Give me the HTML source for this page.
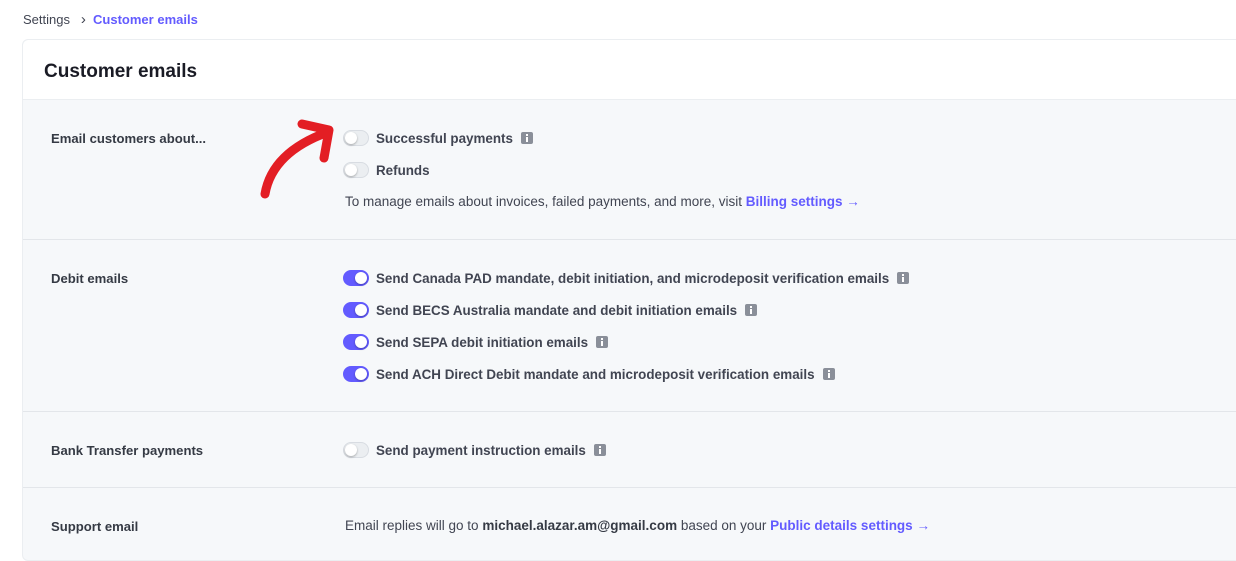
<!DOCTYPE html>
<html><head><style>
body{margin:0;width:1236px;height:544px;overflow:hidden;background:#fff;font-family:"Liberation Sans",sans-serif;color:#353a44;position:relative}
.bc{position:absolute;top:11px;left:23px;font-size:13px;color:#414552}
.bc b{color:#635bff;margin-left:8px}
.card{position:absolute;left:22px;top:39px;width:1240px;height:520px;border:1px solid #ebeef1;border-radius:6px;background:#f6f8fa}
.hd{height:59px;background:#fff;border-bottom:1px solid #ebeef1;border-radius:6px 6px 0 0}
.hd h1{margin:0;position:absolute;left:21px;top:21px;font-size:19px;font-weight:bold;color:#1a1b25}
.sec{position:absolute;left:0;width:100%;border-top:1px solid #e3e6ea}
.lab{position:absolute;left:28px;font-size:13.1px;font-weight:bold;color:#353a44}
.row{position:absolute;left:320px;font-size:13.4px;font-weight:bold;color:#414552;white-space:nowrap;display:flex;align-items:center}
.t{width:26px;height:16px;border-radius:8px;background:#ebeef1;border:1px solid #d8dce2;box-sizing:border-box;position:relative;margin-right:7px}
.t:after{content:"";position:absolute;left:1px;top:1px;width:12px;height:12px;border-radius:50%;background:#fff;box-shadow:0 1px 2px rgba(0,0,0,.3)}
.t.on{background:#635bff;border-color:#635bff}
.t.on:after{left:11px}
.i{display:inline-block;width:12px;height:12px;background:#8a8f99;border-radius:2px;margin-left:8px;position:relative}
.i:after{content:"";position:absolute;left:5px;top:5px;width:2px;height:5px;background:#fff}
.i:before{content:"";position:absolute;left:5px;top:2px;width:2px;height:2px;background:#fff}
a{color:#635bff;font-weight:bold;text-decoration:none}
</style></head><body>
<div class="bc">Settings &nbsp;&nbsp;<span style="font-size:15px">&#x203A;</span> &nbsp;<b style="margin-left:0">Customer emails</b></div>
<div class="card">
<div class="hd"><h1>Customer emails</h1></div>
<div class="lab" style="top:91px">Email customers about...</div>
<div class="row" style="top:90px"><span class="t"></span>Successful payments<span class="i"></span></div>
<div class="row" style="top:122px"><span class="t"></span>Refunds</div>
<div class="row" style="top:154px;left:322px;font-weight:normal;font-size:13.5px">To manage emails about invoices, failed payments, and more, visit&nbsp;<a>Billing settings →</a></div>
<div class="sec" style="top:199px"></div>
<div class="lab" style="top:231px">Debit emails</div>
<div class="row" style="top:230px"><span class="t on"></span>Send Canada PAD mandate, debit initiation, and microdeposit verification emails<span class="i"></span></div>
<div class="row" style="top:262px"><span class="t on"></span>Send BECS Australia mandate and debit initiation emails<span class="i"></span></div>
<div class="row" style="top:294px"><span class="t on"></span>Send SEPA debit initiation emails<span class="i"></span></div>
<div class="row" style="top:326px"><span class="t on"></span>Send ACH Direct Debit mandate and microdeposit verification emails<span class="i"></span></div>
<div class="sec" style="top:371px"></div>
<div class="lab" style="top:403px">Bank Transfer payments</div>
<div class="row" style="top:402px"><span class="t"></span>Send payment instruction emails<span class="i"></span></div>
<div class="sec" style="top:447px"></div>
<div class="lab" style="top:479px">Support email</div>
<div class="row" style="top:478px;left:322px;font-weight:normal;font-size:13.5px">Email replies will go to&nbsp;<b style="color:#353a44">michael.alazar.am@gmail.com</b>&nbsp;based on your&nbsp;<a>Public details settings →</a></div>
</div>
<svg style="position:absolute;left:0;top:0" width="1236" height="544"><path d="M265 194 C270 165 292 145 328 132 M302 124 L329 130 L324 158" fill="none" stroke="#e31e24" stroke-width="9" stroke-linecap="round" stroke-linejoin="round"/></svg>
</body></html>
